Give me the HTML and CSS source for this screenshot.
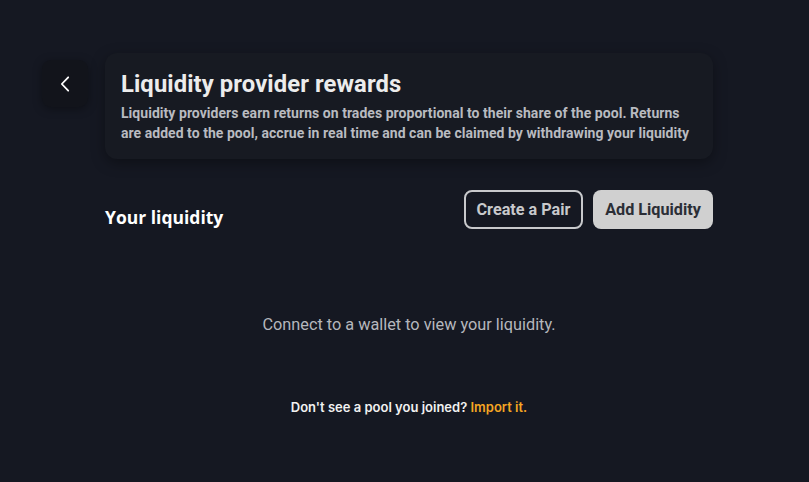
FILE: index.html
```html
<!DOCTYPE html>
<html>
<head>
<meta charset="utf-8">
<link rel="stylesheet" href="styles.css">
</head>
<body>
<div class="page">
  <div class="top">
    <button class="back" aria-label="Back">
      <svg width="16" height="16" viewBox="0 0 16 16"><path d="M11.2 1.3 L4.8 8 L11.2 14.7" fill="none" stroke="#fff" stroke-width="1.8" stroke-linecap="round" stroke-linejoin="round"/></svg>
    </button>
    <div class="main">
      <div class="card">
        <h1 class="card-title">Liquidity provider rewards</h1>
        <p class="card-text">Liquidity providers earn returns on trades proportional to their share of the pool. Returns are added to the pool, accrue in real time and can be claimed by withdrawing your liquidity</p>
      </div>
      <div class="head-row">
        <h2 class="your">Your liquidity</h2>
        <div class="actions">
          <button class="btn btn-outline">Create a Pair</button>
          <button class="btn btn-solid">Add Liquidity</button>
        </div>
      </div>
      <p class="empty">Connect to a wallet to view your liquidity.</p>
      <p class="import">Don't see a pool you joined? <a href="#" class="link">Import it.</a></p>
    </div>
  </div>
</div>
</body>
</html>
```
FILE: styles.css
```css
* { box-sizing: border-box; }
html, body { margin: 0; padding: 0; }
body {
  background: #151822;
  font-family: Roboto, "Liberation Sans", sans-serif;
  width: 809px;
  height: 482px;
  overflow: hidden;
}
.page {
  padding: 53px 0 0 42px;
}
.top {
  display: flex;
  align-items: flex-start;
  gap: 17px;
}
.back {
  margin-top: 7px;
  width: 46px;
  height: 47px;
  border: none;
  border-radius: 9px;
  background: #12141b;
  box-shadow: 0 2px 10px rgba(0,0,0,0.35);
  display: flex;
  align-items: center;
  justify-content: center;
  padding: 0;
}
.main {
  width: 608px;
}
.card {
  background: #171a22;
  border-radius: 12px;
  box-shadow: 0 4px 14px rgba(0,0,0,0.35);
  padding: 17px 20px 0 16px;
  height: 106px;
}
.card-title {
  margin: 0;
  font-size: 23.8px;
  font-weight: 700;
  color: #ececec;
  line-height: 28px;
  letter-spacing: 0.1px;
}
.card-text {
  margin: 5px 0 0;
  font-size: 14px;
  font-weight: 700;
  color: #b9bbc0;
  line-height: 20px;
  letter-spacing: 0.04px;
}
.head-row {
  display: flex;
  justify-content: space-between;
  align-items: center;
  margin-top: 31px;
}
.your {
  margin: 14px 0 0;
  font-family: "Open Sans", sans-serif;
  font-size: 17.5px;
  font-weight: 700;
  color: #ffffff;
}
.actions {
  display: flex;
  gap: 10px;
}
.btn {
  height: 39px;
  border-radius: 8px;
  font-family: Roboto, sans-serif;
  font-size: 16.2px;
  font-weight: 700;
  padding: 0;
  white-space: nowrap;
}
.btn-outline {
  width: 119px;
  background: transparent;
  border: 2px solid #c8c9cc;
  color: #c8c9cc;
}
.btn-solid {
  width: 120px;
  background: #d0d0d0;
  border: none;
  color: #2b2e36;
}
.empty {
  margin: 86px 0 0;
  text-align: center;
  font-size: 16.3px;
  color: #b5b7bd;
}
.import {
  margin: 65px 0 0;
  text-align: center;
  font-size: 13px;
  font-weight: 600;
  font-family: Inter, sans-serif;
  color: #f1f1f1;
}
.link {
  color: #f5a623;
  text-decoration: none;
}
```
